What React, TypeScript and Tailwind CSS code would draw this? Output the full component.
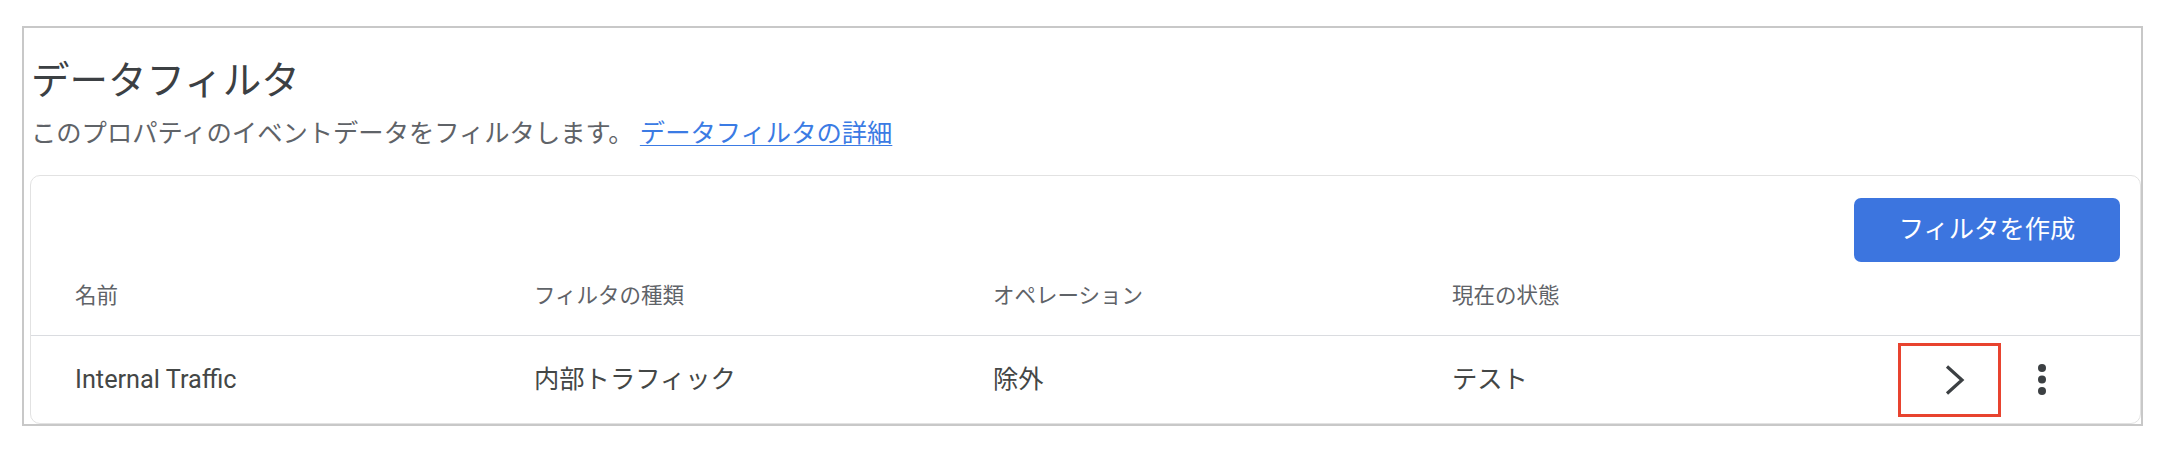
import React from "react";

const cols = [
  { label: "名前", value: "Internal Traffic", w: "w-[459px]" },
  { label: "フィルタの種類", value: "内部トラフィック", w: "w-[459px]" },
  { label: "オペレーション", value: "除外", w: "w-[459px]" },
  { label: "現在の状態", value: "テスト", w: "w-[446px]" },
];

export default function App() {
  return (
    <div className="w-[2166px] h-[466px] bg-white font-['Roboto','Noto_Sans_CJK_JP',sans-serif] pt-[26px] pl-[22px]">
      <div className="w-[2121px] border-2 border-[#c8c8c8] pl-[6px]">
        {/* header */}
        <div className="pt-[29px]">
          <h1 className="text-[38.5px] leading-[48px] text-[#3c4043] font-normal pl-[1px]">
            データフィルタ
          </h1>
          <p className="mt-[13px] text-[25.3px] leading-[32px] text-[#5f6368] pl-[1px]">
            このプロパティのイベントデータをフィルタします。{" "}
            <a className="text-[#3b7be4] underline decoration-1 underline-offset-[3px]">
              データフィルタの詳細
            </a>
          </p>
        </div>

        {/* card */}
        <div className="mt-[25px] w-[2111px] border border-[#e2e2e2] rounded-[10px]">
          <div className="flex justify-end pt-[22px] pr-[20px]">
            <button className="w-[266px] h-[64px] rounded-[7px] bg-[#3c75df] text-white text-[25.3px] leading-none">
              フィルタを作成
            </button>
          </div>

          {/* header row */}
          <div className="flex items-center h-[74px] pb-[4px] pl-[44px] border-b border-[#dadce0]">
            {cols.map((c) => (
              <div key={c.label} className={`${c.w} text-[21.5px] text-[#5f6368]`}>
                {c.label}
              </div>
            ))}
          </div>

          {/* body row */}
          <div className="flex items-center h-[87px] pl-[44px]">
            {cols.map((c) => (
              <div key={c.label} className={`${c.w} text-[25.3px] text-[#444746]`}>
                {c.value}
              </div>
            ))}
            <div className="w-[103px] h-[74px] border-[3px] border-[#e8432f] flex items-center pl-[44px]">
              <svg width="20" height="32" viewBox="0 0 20 32" fill="none">
                <polyline
                  points="2,2.5 17,16 2,29.5"
                  stroke="#3c4043"
                  strokeWidth="3.2"
                  strokeLinejoin="miter"
                />
              </svg>
            </div>
            <div className="w-[82px] flex justify-center">
              <svg width="10" height="34" viewBox="0 0 10 34" fill="#3c4043">
                <circle cx="5" cy="5" r="4" />
                <circle cx="5" cy="16.5" r="4" />
                <circle cx="5" cy="28" r="4" />
              </svg>
            </div>
          </div>
        </div>
      </div>
    </div>
  );
}
